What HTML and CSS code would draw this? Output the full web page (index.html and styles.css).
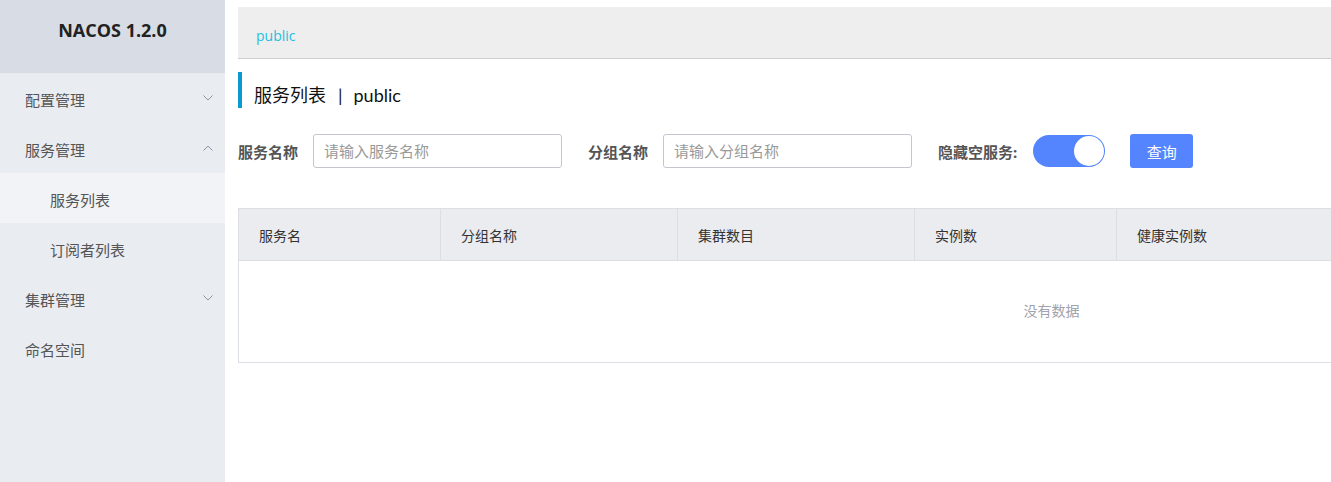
FILE: index.html
```html
<!DOCTYPE html>
<html lang="zh-CN">
<head>
    <meta charset="UTF-8">
    <title>Nacos</title>
    <link rel="stylesheet" href="styles.css">
</head>
<body>
    <div class="layout">
        <div class="aside">
            <div class="logo">NACOS 1.2.0</div>
            <ul class="menu">
                <li class="menu-item">配置管理
                    <svg class="arrow" viewBox="0 0 10 6"><path d="M0.5 0.5 L5 5 L9.5 0.5" /></svg>
                </li>
                <li class="menu-item">服务管理
                    <svg class="arrow" viewBox="0 0 10 6"><path d="M0.5 5.5 L5 1 L9.5 5.5" /></svg>
                </li>
                <li class="menu-item sub active">服务列表</li>
                <li class="menu-item sub">订阅者列表</li>
                <li class="menu-item">集群管理
                    <svg class="arrow" viewBox="0 0 10 6"><path d="M0.5 0.5 L5 5 L9.5 0.5" /></svg>
                </li>
                <li class="menu-item">命名空间</li>
            </ul>
        </div>

        <div class="main">
            <div class="ns-bar">
                <span class="ns-link">public</span>
            </div>

            <h1 class="page-title">服务列表<span class="sep">|</span>public</h1>

            <div class="search-form">
                <label class="form-label">服务名称</label>
                <input class="form-input" placeholder="请输入服务名称">
                <label class="form-label">分组名称</label>
                <input class="form-input" placeholder="请输入分组名称">
                <label class="form-label">隐藏空服务:</label>
                <span class="switch"><span class="knob"></span></span>
                <button class="btn-primary">查询</button>
            </div>

            <table class="table">
                <colgroup>
                    <col style="width:202px">
                    <col style="width:237px">
                    <col style="width:237px">
                    <col style="width:202px">
                    <col style="width:748px">
                </colgroup>
                <thead>
                    <tr>
                        <th>服务名</th>
                        <th>分组名称</th>
                        <th>集群数目</th>
                        <th>实例数</th>
                        <th>健康实例数</th>
                    </tr>
                </thead>
                <tbody>
                    <tr>
                        <td colspan="5" class="empty">没有数据</td>
                    </tr>
                </tbody>
            </table>
        </div>
    </div>
</body>
</html>
```

FILE: styles.css
```css
html, body{
    margin: 0;
    padding: 0;
    height: 100%;
    overflow: hidden;
}
body{
    font-family: "Noto Sans", "Noto Sans CJK SC", sans-serif;
    font-size: 14px;
    color: #333;
    background: #fff;
}
.layout{
    display: flex;
    height: 482px;
}
.aside{
    width: 225px;
    flex-shrink: 0;
    background-color: #e9ecf1;
}
.logo{
    height: 73px;
    background-color: #d8dde5;
    text-align: center;
    line-height: 61px;
    font-family: "Open Sans", "Noto Sans", sans-serif;
    font-weight: bold;
    font-size: 18px;
    color: #222;
}
.menu{
    list-style: none;
    margin: 0;
    padding: 0;
}
.menu-item{
    position: relative;
    height: 50px;
    line-height: 54px;
    padding-left: 25px;
    color: #555;
    font-size: 15px;
}
.menu-item.sub{
    padding-left: 50px;
}
.menu-item.active{
    background-color: #f1f3f6;
}
.arrow{
    position: absolute;
    right: 12px;
    top: 22px;
    width: 10px;
    height: 6px;
    fill: none;
    stroke: #8c95a8;
    stroke-width: 1;
}
.main{
    flex: 1;
    min-width: 0;
    padding: 7px 0 0 13px;
    overflow: hidden;
}
.ns-bar{
    height: 52px;
    width: 1700px;
    background-color: #eeeeee;
    border-bottom: 1px solid #cfcfcf;
    padding-left: 18px;
    box-sizing: border-box;
    line-height: 58px;
}
.ns-link{
    font-family: "Open Sans", "Noto Sans", sans-serif;
    color: #1dbfe0;
    font-size: 14px;
}
.page-title{
    margin: 13px 0 0 0;
    height: 36px;
    line-height: 46px;
    border-left: 4px solid #0a9ad2;
    padding-left: 12px;
    font-size: 18px;
    font-weight: normal;
    color: #111;
    font-family: "Lato", "Noto Sans CJK SC", sans-serif;
}
.sep{
    margin: 0 11px 0 12px;
}
.search-form{
    display: flex;
    align-items: center;
    margin-top: 26px;
    height: 34px;
}
.form-label{
    font-weight: bold;
    font-size: 15px;
    color: #555;
    margin-right: 15px;
}
.form-input{
    width: 249px;
    height: 34px;
    box-sizing: border-box;
    border: 1px solid #c4c6cf;
    border-radius: 3px;
    padding: 0 10px;
    font-size: 15px;
    font-family: "Noto Sans", "Noto Sans CJK SC", sans-serif;
    margin-right: 26px;
    outline: none;
}
.form-input::placeholder{
    color: #999;
}
.switch{
    display: inline-block;
    width: 72px;
    height: 32px;
    border-radius: 16px;
    background-color: #5584ff;
    margin-left: 1px;
    margin-right: 25px;
    position: relative;
}
.knob{
    position: absolute;
    right: 1px;
    top: 1px;
    width: 30px;
    height: 30px;
    border-radius: 50%;
    background: #fff;
}
.btn-primary{
    width: 63px;
    height: 34px;
    border: none;
    border-radius: 3px;
    background-color: #5584ff;
    color: #fff;
    font-size: 15px;
    font-family: "Noto Sans", "Noto Sans CJK SC", sans-serif;
}
.table{
    margin-top: 40px;
    width: 1626px;
    border-collapse: collapse;
    table-layout: fixed;
    border: 1px solid #dcdee3;
}
.table th{
    height: 51px;
    background-color: #ebecf0;
    border-right: 1px solid #dcdee3;
    border-bottom: 1px solid #dcdee3;
    text-align: left;
    padding: 0 20px;
    font-weight: normal;
    font-size: 14px;
    color: #333;
}
.table td.empty{
    height: 102px;
    padding: 0 0 4px 0;
    box-sizing: border-box;
    text-align: center;
    color: #a0a2ad;
    font-size: 14px;
}
```
